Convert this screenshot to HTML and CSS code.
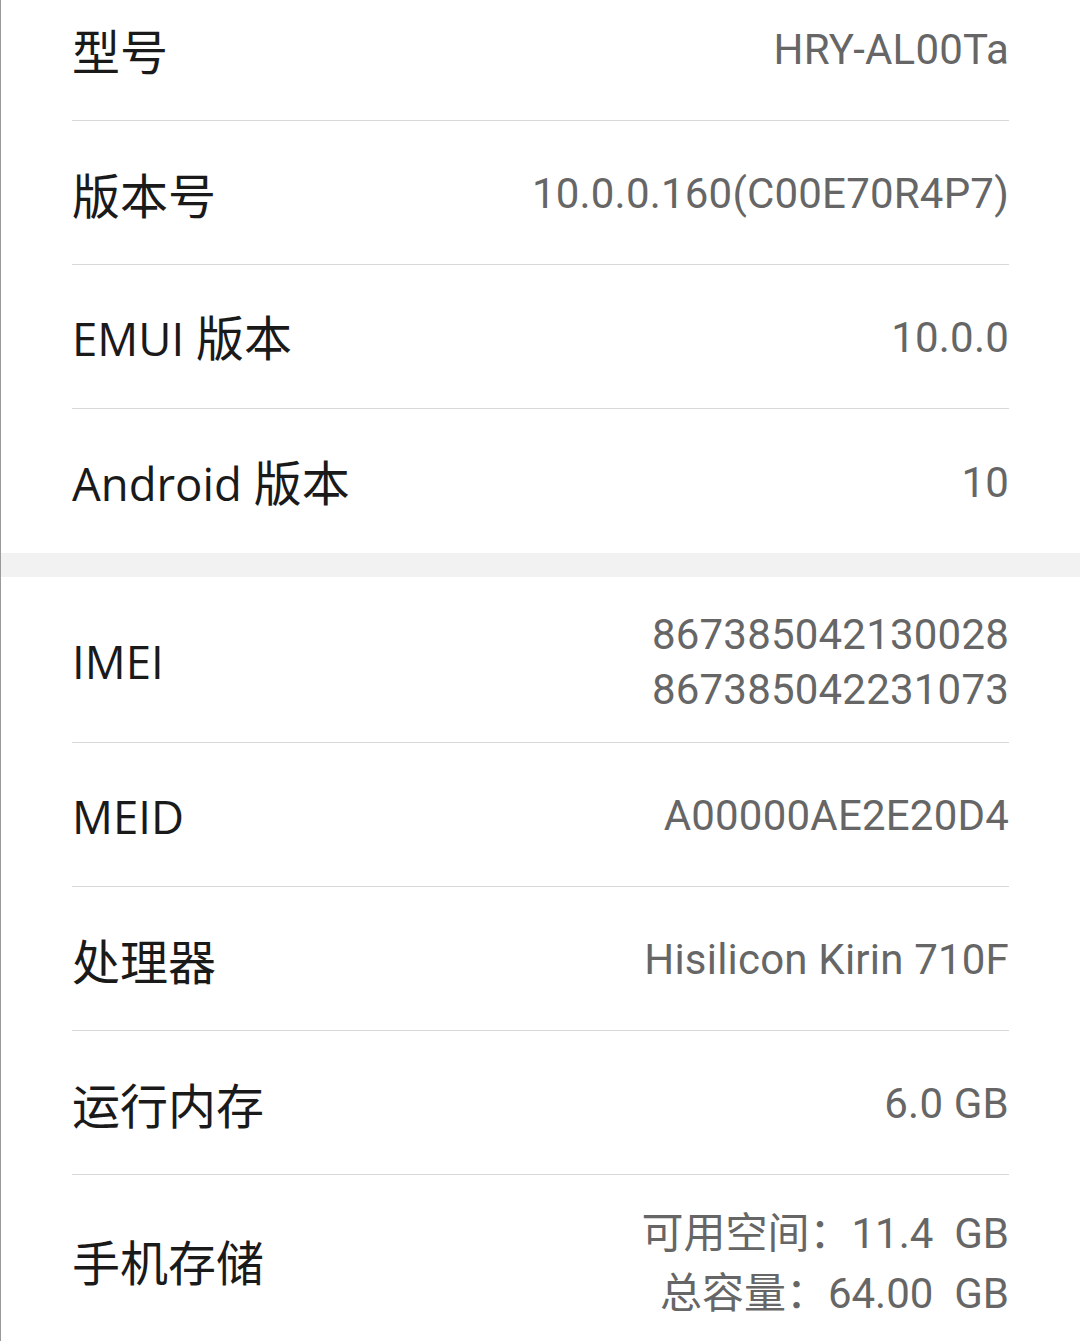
FILE: index.html
```html
<!DOCTYPE html>
<html lang="zh-CN">
<head>
<meta charset="utf-8">
<link rel="stylesheet" href="styles.css">
</head>
<body>
<div class="page">
  <section class="group first">
    <div class="row"><div class="label">型号</div><div class="value">HRY-AL00Ta</div></div>
    <div class="row"><div class="label">版本号</div><div class="value">10.0.0.160(C00E70R4P7)</div></div>
    <div class="row"><div class="label"><span class="lat">EMUI </span>版本</div><div class="value">10.0.0</div></div>
    <div class="row last"><div class="label"><span class="lat">Android </span>版本</div><div class="value">10</div></div>
  </section>
  <div class="band"></div>
  <section class="group">
    <div class="row tall"><div class="label"><span class="lat">IMEI</span></div><div class="value multi"><span>867385042130028</span><span>867385042231073</span></div></div>
    <div class="row"><div class="label"><span class="lat">MEID</span></div><div class="value">A00000AE2E20D4</div></div>
    <div class="row"><div class="label">处理器</div><div class="value">Hisilicon Kirin 710F</div></div>
    <div class="row"><div class="label">运行内存</div><div class="value">6.0 GB</div></div>
    <div class="row tall last"><div class="label">手机存储</div><div class="value multi storage"><span>可用空间：11.4  GB</span><span>总容量：64.00  GB</span></div></div>
  </section>
</div>
</body>
</html>
```
FILE: styles.css
```css
html, body {
  margin: 0;
  padding: 0;
  background: #ffffff;
}
body {
  width: 1080px;
  height: 1341px;
  overflow: hidden;
}
.page {
  border-left: 1px solid #9a9a9a;
  min-height: 1341px;
  box-sizing: border-box;
}
.group {
  display: flex;
  flex-direction: column;
}
.group.first {
  margin-top: -23px;
}
.row {
  height: 143px;
  margin: 0 71px 0 71px;
  border-bottom: 1px solid #d8d8d8;
  display: flex;
  align-items: center;
  justify-content: space-between;
}
.row.last {
  border-bottom: none;
  height: 144px;
}
.row.tall {
  height: 165px;
}
.row.tall.last {
  height: 170px;
}
.label {
  font-family: "Noto Sans CJK SC", sans-serif;
  font-size: 48px;
  color: #1a1a1a;
  white-space: pre;
  line-height: 60px;
}
.lat {
  font-family: "Open Sans", "Noto Sans", sans-serif;
  font-size: 45.5px;
}
.value {
  font-family: Roboto, "Noto Sans CJK SC", sans-serif;
  font-size: 42px;
  letter-spacing: 0.2px;
  color: #666666;
  white-space: pre;
  text-align: right;
  padding-top: 2px;
}
.value.multi {
  display: flex;
  flex-direction: column;
  align-items: flex-end;
  line-height: 55px;
  padding-top: 4px;
}
.value.storage {
  line-height: 60px;
  padding-top: 8px;
  letter-spacing: 0;
}
.band {
  height: 24px;
  background: #f2f2f2;
}
```
